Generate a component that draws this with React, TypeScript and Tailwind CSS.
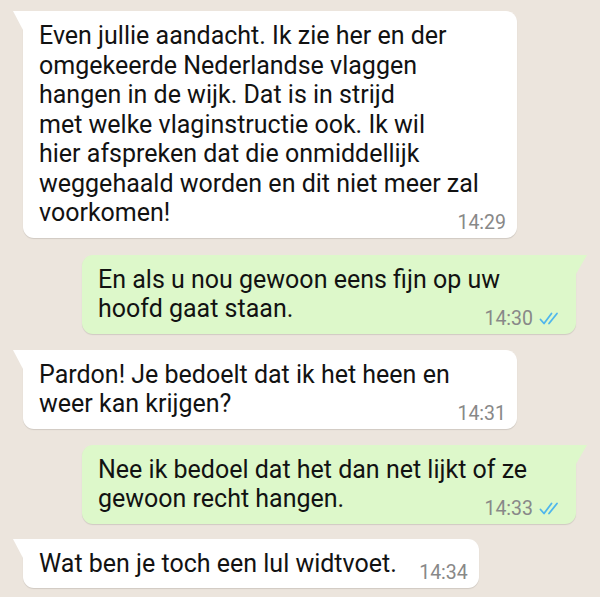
const FONT = "font-['Roboto','Noto_Sans',sans-serif]";

type Msg = {
  id: number;
  out: boolean;
  lines: string[];
  time: string;
  width?: string;
  mt: string;
};

const MESSAGES: Msg[] = [
  {
    id: 1,
    out: false,
    lines: [
      "Even jullie aandacht. Ik zie her en der",
      "omgekeerde Nederlandse vlaggen",
      "hangen in de wijk. Dat is in strijd",
      "met welke vlaginstructie ook. Ik wil",
      "hier afspreken dat die onmiddellijk",
      "weggehaald worden en dit niet meer zal",
      "voorkomen!",
    ],
    time: "14:29",
    width: "w-[494px]",
    mt: "mt-[11px]",
  },
  {
    id: 2,
    out: true,
    lines: ["En als u nou gewoon eens fijn op uw", "hoofd gaat staan."],
    time: "14:30",
    width: "w-[494px]",
    mt: "mt-[17px]",
  },
  {
    id: 3,
    out: false,
    lines: ["Pardon! Je bedoelt dat ik het heen en", "weer kan krijgen?"],
    time: "14:31",
    width: "w-[494px]",
    mt: "mt-[16px]",
  },
  {
    id: 4,
    out: true,
    lines: ["Nee ik bedoel dat het dan net lijkt of ze", "gewoon recht hangen."],
    time: "14:33",
    width: "w-[494px]",
    mt: "mt-[16px]",
  },
  {
    id: 5,
    out: false,
    lines: ["Wat ben je toch een lul widtvoet."],
    time: "14:34",
    mt: "mt-[15px]",
  },
];

function DoubleCheck() {
  return (
    <svg width="22" height="13" viewBox="0 0 22 13" fill="none" className="ml-[6px]">
      <path d="M1.5 7.5 L5 11.5 L12.5 1.5" stroke="#4fb6ec" strokeWidth="1.8" strokeLinecap="round" strokeLinejoin="round" />
      <path d="M10 11.5 L18 1.5" stroke="#4fb6ec" strokeWidth="1.8" strokeLinecap="round" />
    </svg>
  );
}

function Bubble({ msg }: { msg: Msg }) {
  const bg = msg.out ? "bg-[#ddf8ca]" : "bg-white";
  return (
    <div className={`flex ${msg.out ? "justify-end pr-[24px]" : "justify-start pl-[23px]"} ${msg.mt}`}>
      <div
        className={`relative ${msg.width ?? "w-fit"} ${bg} shadow-[0_1px_1px_rgba(0,0,0,0.12)] pt-[10px] pb-[10px] pl-[16px] pr-[12px] ${
          msg.out ? "rounded-[11px] rounded-tr-none" : "rounded-[11px] rounded-tl-none"
        }`}
      >
        {msg.out ? (
          <svg width="11" height="19" viewBox="0 0 11 19" className="absolute top-0 -right-[11px]">
            <polygon points="0,0 11,0 0,19" fill="#ddf8ca" />
          </svg>
        ) : (
          <svg width="10" height="19" viewBox="0 0 10 19" className="absolute top-0 -left-[10px]">
            <polygon points="0,0 10,0 10,19" fill="#ffffff" />
          </svg>
        )}
        <p className="text-[25px] leading-[29.5px] text-[#121212] whitespace-nowrap">
          {msg.lines.map((line, i) => (
            <span key={i}>
              {line}
              {i < msg.lines.length - 1 ? <br /> : null}
            </span>
          ))}
          <span className={`inline-block ${msg.out ? "w-[96px]" : "w-[70px]"}`} />
        </p>
        <div
          className={`absolute bottom-[6px] ${msg.out ? "right-[15px]" : "right-[11px]"} flex items-center text-[19.5px] leading-[19px] text-[#888888]`}
        >
          <span>{msg.time}</span>
          {msg.out ? <DoubleCheck /> : null}
        </div>
      </div>
    </div>
  );
}

export default function App() {
  return (
    <div className={`${FONT} w-[600px] h-[597px] overflow-hidden bg-[#ece5dd]`}>
      {MESSAGES.map((m) => (
        <Bubble key={m.id} msg={m} />
      ))}
    </div>
  );
}
